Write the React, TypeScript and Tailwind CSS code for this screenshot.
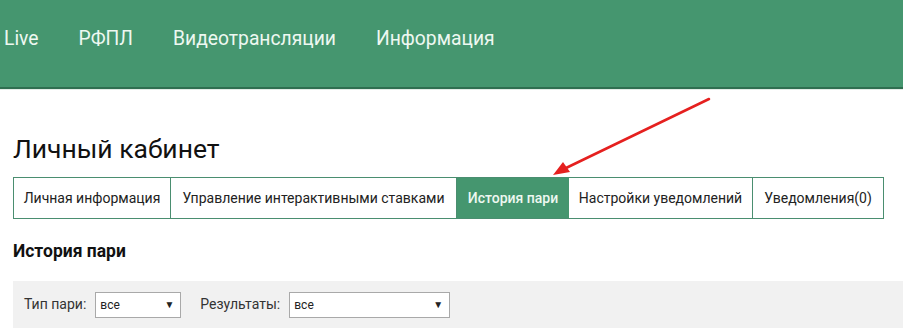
export default function App() {
  const tabs = [
    { label: "Личная информация", w: "w-[157px]" },
    { label: "Управление интерактивными ставками", w: "w-[286px]" },
    { label: "История пари", w: "w-[112px]" },
    { label: "Настройки уведомлений", w: "w-[184px]" },
    { label: "Уведомления(0)", w: "w-[130px]" },
  ];
  const active = 2;

  return (
    <div className="relative h-[333px] w-[903px] overflow-hidden bg-white font-['Roboto',sans-serif] text-[#222]">
      <header className="h-[89px] border-b-[2px] border-[#2f6e50] bg-[#45966f]">
        <nav className="flex gap-[40px] pl-[4px] pt-[25px] text-[19.3px] text-[#eef8f1]">
          <span>Live</span>
          <span>РФПЛ</span>
          <span>Видеотрансляции</span>
          <span>Информация</span>
        </nav>
      </header>
      <div className="h-[1px] bg-[#e3ece7]" />

      <div className="px-[13px]">
        <h1 className="mt-[42px] text-[26.5px] leading-[34px] text-[#111]">Личный кабинет</h1>

        <div className="mt-[11px] flex w-[871px] border border-[#4a8e70]">
          {tabs.map((t, i) => (
            <div
              key={t.label}
              className={
                i === active
                  ? `flex h-[40px] shrink-0 items-center justify-center whitespace-nowrap bg-[#45966f] text-[14px] font-medium text-[#eef8f1] ${t.w}`
                  : `flex h-[40px] shrink-0 items-center justify-center whitespace-nowrap border-r border-[#4a8e70] text-[14px] last:border-r-0 ${t.w}`
              }
            >
              {t.label}
            </div>
          ))}
        </div>

        <h2 className="mt-[20px] text-[17.5px] font-bold leading-[24px] text-[#111]">История пари</h2>
      </div>

      <div className="ml-[13px] mt-[18px] flex h-[47px] items-center bg-[#f1f1f1] pl-[11px] text-[14px] text-[#333]">
        <span>Тип пари:</span>
        <div className="ml-[9px] flex h-[26px] w-[86px] items-center justify-between border border-[#a9a9a9] bg-white pl-[4px] pr-[6px] text-[12px] text-[#222]">
          <span>все</span>
          <span className="text-[10px]">▼</span>
        </div>
        <span className="ml-[19px]">Результаты:</span>
        <div className="ml-[9px] flex h-[26px] w-[161px] items-center justify-between border border-[#a9a9a9] bg-white pl-[4px] pr-[6px] text-[12px] text-[#222]">
          <span>все</span>
          <span className="text-[10px]">▼</span>
        </div>
      </div>

      <svg className="absolute left-0 top-0" width="903" height="333" viewBox="0 0 903 333">
        <line x1="709" y1="99" x2="566" y2="168" stroke="#e5201f" strokeWidth="2.5" strokeLinecap="round" />
        <polygon points="553,175 563,162 570,172" fill="#e5201f" />
      </svg>
    </div>
  );
}
